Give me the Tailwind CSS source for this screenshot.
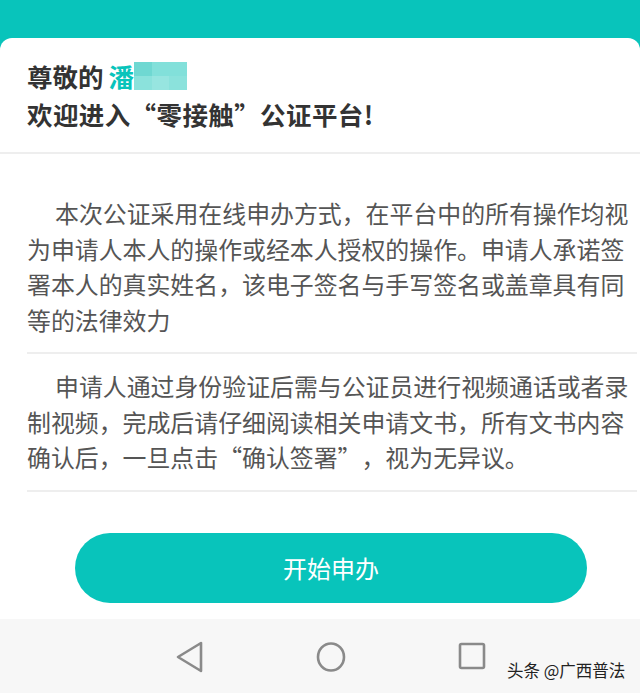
<!DOCTYPE html>
<html lang="zh-CN">
<head>
    <meta charset="UTF-8">
    <meta name="viewport" content="width=device-width, initial-scale=1.0">
    <title>零接触公证平台</title>
    <script src="https://cdn.jsdelivr.net/npm/@tailwindcss/browser@4"></script>
</head>
<body class="w-[640px] h-[693px] overflow-hidden flex flex-col bg-[#08c4bb] font-['Noto_Sans_CJK_SC','Liberation_Sans',sans-serif]">

    <div class="h-[38px] shrink-0"></div>

    <main class="flex-1 flex flex-col bg-white rounded-t-[12px] min-h-0">
        <header class="h-[116px] shrink-0 pl-[27px] pt-[19px] border-b-2 border-[#eeeeee] text-[25.5px] leading-[38px] font-bold text-[#333333] antialiased">
            <div class="flex items-center">
                <span>尊敬的</span>
                <span class="ml-[5px] text-[#08c4bb]">潘</span>
                <span class="w-[53px] h-[28px] grid grid-cols-3 grid-rows-2">
                    <i class="bg-[#6fd8d2]"></i><i class="bg-[#82e0da]"></i><i class="bg-[#82e0da]"></i>
                    <i class="bg-[#8be2dc]"></i><i class="bg-[#97e5e0]"></i><i class="bg-[#8be2dc]"></i>
                </span>
            </div>
            <div class="tracking-[0.4px]">欢迎进入“零接触”公证平台!</div>
        </header>

        <section class="flex-1 pl-[27px] pr-[3px] text-[23.9px] leading-[35.5px] text-[#555555] [text-spacing-trim:space-all]">
            <div class="h-[200px] pt-[41px] border-b-2 border-[#eeeeee]">
                <p class="pl-[28px]">本次公证采用在线申办方式&#65292;在平台中的所有操作均视</p>
                <p>为申请人本人的操作或经本人授权的操作。申请人承诺签</p>
                <p>署本人的真实姓名&#65292;该电子签名与手写签名或盖章具有同</p>
                <p>等的法律效力</p>
            </div>
            <div class="h-[138px] pt-[14px] border-b-2 border-[#eeeeee]">
                <p class="pl-[28px]">申请人通过身份验证后需与公证员进行视频通话或者录</p>
                <p>制视频&#65292;完成后请仔细阅读相关申请文书&#65292;所有文书内容</p>
                <p>确认后&#65292;一旦点击“确认签署”&#65292;视为无异议。</p>
            </div>
            <div class="flex justify-start pl-[48px] pt-[41px]">
                <button class="w-[512px] h-[70px] rounded-[35px] bg-[#08c4bb] text-white text-[24px]">开始申办</button>
            </div>
        </section>
    </main>

    <nav class="relative h-[74px] shrink-0 bg-[#f7f7f7]">
        <div class="flex items-start pt-[22px] pl-[176px]">
            <svg class="w-[28px] h-[32px]" viewBox="0 0 28 32" fill="none" stroke="#8a8a8a" stroke-width="2.6" stroke-linejoin="round"><path d="M25 2V30L2 16Z"/></svg>
            <svg class="w-[30px] h-[32px] ml-[112px]" viewBox="0 0 30 32" fill="none" stroke="#8a8a8a" stroke-width="2.6"><ellipse cx="15" cy="16" rx="13" ry="13.5"/></svg>
            <svg class="w-[28px] h-[28px] ml-[112px] mt-[1px]" viewBox="0 0 28 28" fill="none" stroke="#8a8a8a" stroke-width="2.6" stroke-linejoin="round"><rect x="2" y="2" width="24" height="24" rx="1.5"/></svg>
        </div>
        <span class="absolute left-[507px] top-[40px] text-[16.5px] leading-[22px] text-[#222222] whitespace-nowrap">头条 @广西普法</span>
    </nav>

</body>
</html>
